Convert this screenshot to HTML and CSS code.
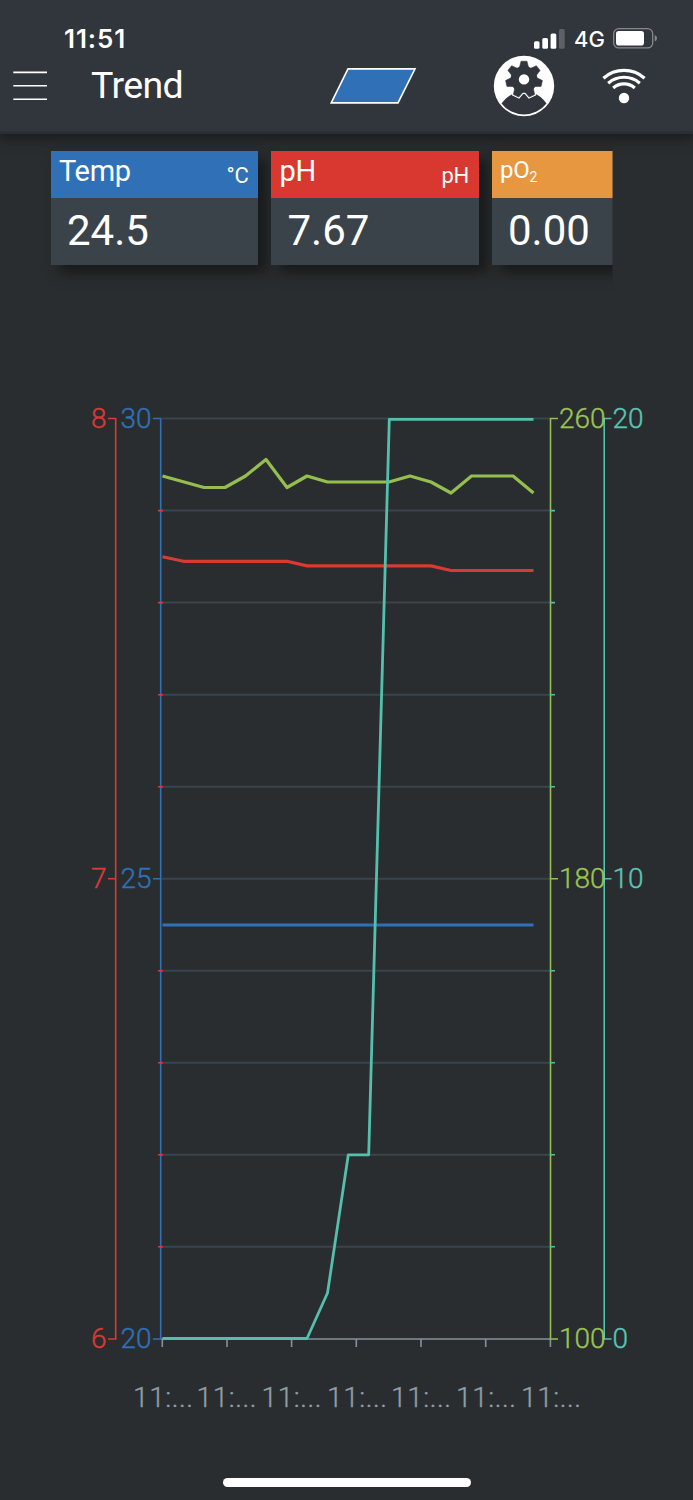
FILE: index.html
```html
<!DOCTYPE html>
<html lang="en">
<head>
  <meta charset="UTF-8" />
  <meta name="viewport" content="width=device-width, initial-scale=1.0"/>
  <title>Trend</title>
  <link rel="stylesheet" href="styles.css">
</head>
<body>
  <header>
    <div class="status-bar">
      <span class="time">11:51</span>
      <svg class="signal" width="31" height="20" viewBox="0 0 31 20">
        <rect x="0" y="12.3" width="5.5" height="7.5" rx="1.5" fill="#fff"/>
        <rect x="8.3" y="9" width="5.7" height="10.8" rx="1.5" fill="#fff"/>
        <rect x="16.6" y="4.5" width="5.7" height="15.3" rx="1.5" fill="#fff"/>
        <rect x="25" y="0" width="5.7" height="19.8" rx="1.5" fill="#5d6065"/>
      </svg>
      <span class="network">4G</span>
      <svg class="battery" width="44" height="21" viewBox="0 0 44 21">
        <rect x="0.7" y="0.7" width="39" height="19.2" rx="5" fill="none" stroke="#85888c" stroke-width="1.3"/>
        <rect x="3" y="3" width="28" height="14.6" rx="2.8" fill="#fff"/>
        <path d="M41.7 7 Q44 8 44 10.3 Q44 12.6 41.7 13.6 Z" fill="#85888c"/>
      </svg>
    </div>
    <nav>
      <svg class="menu" width="34" height="30" viewBox="0 0 34 30" stroke="#fff" stroke-width="1.6">
        <path d="M0.3 1.4H34 M0.3 14.8H34 M0.3 28.2H34"/>
      </svg>
      <h1>Trend</h1>
      <svg class="shape" width="87" height="36" viewBox="0 0 87 36">
        <path d="M18 0.9 H85 L68 34.9 H1.2 Z" fill="#2f70b7" stroke="#fff" stroke-width="1.6"/>
      </svg>
      <svg class="settings" width="62" height="62" viewBox="-31 -31 62 62">
        <defs>
          <path id="tooth" d="M-4.8 -11 L-3 -18.2 H3 L4.8 -11 Z"/>
          <g id="gear">
            <circle r="13.2"/>
            <use href="#tooth"/>
            <use href="#tooth" transform="rotate(51.43)"/>
            <use href="#tooth" transform="rotate(102.86)"/>
            <use href="#tooth" transform="rotate(154.29)"/>
            <use href="#tooth" transform="rotate(205.71)"/>
            <use href="#tooth" transform="rotate(257.14)"/>
            <use href="#tooth" transform="rotate(308.57)"/>
          </g>
        </defs>
        <circle r="30.2" fill="#fff"/>
        <path d="M-22.5 17.5 C-19 12.5 -14.5 9 -9.5 7.3 H9.5 C14.5 9 19 12.5 22.5 17.5 A28.5 28.5 0 0 1 -22.5 17.5 Z" fill="#31353c"/>
        <g transform="translate(0 -6.6)">
          <use href="#gear" fill="#fff" stroke="#fff" stroke-width="2.8"/>
          <use href="#gear" fill="#31353c" stroke="#31353c" stroke-width="0.5"/>
          <circle r="5.2" fill="#fff"/>
        </g>
      </svg>
      <svg class="wifi" width="44" height="36" viewBox="0 0 44 36" fill="none" stroke="#fff" stroke-width="3.2">
        <path d="M1.4 10.2 A31 31 0 0 1 42.6 10.2"/>
        <path d="M6.2 15.2 A24 24 0 0 1 37.8 15.2"/>
        <path d="M11.2 20 A16.5 16.5 0 0 1 32.8 20"/>
        <circle cx="22" cy="30" r="5.2" fill="#fff" stroke="none"/>
      </svg>
    </nav>
  </header>

  <!-- Sensor values -->
  <section class="cards">
    <div class="card">
      <div class="card-head temp"><span class="name">Temp</span><span class="unit">°C</span></div>
      <div class="value">24.5</div>
    </div>
    <div class="card">
      <div class="card-head ph"><span class="name">pH</span><span class="unit">pH</span></div>
      <div class="value">7.67</div>
    </div>
    <div class="card">
      <div class="card-head po2"><span class="name small">pO<sub>2</sub></span></div>
      <div class="value">0.00</div>
    </div>
  </section>

  <!-- Trend chart -->
  <svg class="chart" width="693" height="1060" viewBox="0 380 693 1060">
    <path class="grid" d="M162 418.5H550 M162 510.6H550 M162 602.6H550 M162 694.7H550 M162 786.7H550 M162 878.7H550 M162 970.7H550 M162 1062.7H550 M162 1154.8H550 M162 1246.8H550"/>

    <path class="axis gray" d="M161 1339H551 M162.3 1339V1347 M227 1339V1347 M291.6 1339V1347 M356.3 1339V1347 M421 1339V1347 M485.7 1339V1347 M550.4 1339V1347"/>
    <path class="axis red" d="M108 418.5H115.7V1339H108"/>
    <path class="axis blue" d="M153 418.5H160.7V1339H153 M153 878.7H161"/>
    <path class="axis red" d="M108 878.7H116"/>
    <path class="axis green" d="M558 418.5H550.5V1339H558 M550 878.7H558"/>
    <path class="axis teal" d="M611.5 418.5H604.2V1339H611.5 M604 878.7H611.5"/>
    <path class="axis red" d="M158 510.6H163 M158 602.6H163 M158 694.7H163 M158 786.7H163 M158 970.7H163 M158 1062.7H163 M158 1154.8H163 M158 1246.8H163"/>
    <path class="axis teal" d="M550 510.6H555 M550 602.6H555 M550 694.7H555 M550 786.7H555 M550 970.7H555 M550 1062.7H555 M550 1154.8H555 M550 1246.8H555"/>

    <polyline class="line blue" points="162.5,925 533.5,925"/>
    <polyline class="line red" points="162.5,556.7 183.5,561.3 287,561.3 307,565.9 431,565.9 451,570.5 533.5,570.5"/>
    <polyline class="line green" points="162.5,476 204,487.5 225,487.5 245.5,476 266,459.5 287,487.5 307,476 327.5,482 389,482 410,476 431,482 451,493 471.5,476 513,476 533.5,493"/>
    <polyline class="line teal" points="162.5,1338.5 307,1338.5 327.5,1293 348.3,1154.8 368.7,1154.8 389.3,419.3 533.5,419.3"/>

    <g class="label red">
      <text x="91" y="428">8</text><text x="91" y="888.3">7</text><text x="91" y="1348.3">6</text>
    </g>
    <g class="label blue">
      <text x="120.5" y="428">30</text><text x="120.5" y="888.3">25</text><text x="120.5" y="1348.3">20</text>
    </g>
    <g class="label green">
      <text x="559" y="428">260</text><text x="559" y="888.3">180</text><text x="559" y="1348.3">100</text>
    </g>
    <g class="label teal">
      <text x="612.5" y="428">20</text><text x="612.5" y="888.3">10</text><text x="612.5" y="1348.3">0</text>
    </g>
    <g class="label gray">
      <text x="133" y="1407">11:...</text><text x="196.5" y="1407">11:...</text><text x="261.5" y="1407">11:...</text><text x="327" y="1407">11:...</text><text x="391" y="1407">11:...</text><text x="456" y="1407">11:...</text><text x="521" y="1407">11:...</text>
    </g>
  </svg>

  <div class="home-bar"></div>
</body>
</html>
```
FILE: styles.css
```css
body {
  font-family: Roboto, sans-serif;
  margin: 0;
  height: 1500px;
  background: #2a2d2f;
  color: #fff;
  overflow: hidden;
}
header {
  height: 131px;
  background: #31353c;
  border-bottom: 3px solid #2b2f33;
  box-shadow: 0 2px 12px 2px #181a1b;
}

/* Status bar */
.status-bar {
  display: flex;
  align-items: center;
  height: 35px;
  padding: 21px 0 0 64px;
  font-family: Inter, sans-serif;
}
.time {
  width: 470px;
  font-size: 26px;
  font-weight: 600;
  letter-spacing: 0.9px;
}
.network {
  width: 39px;
  margin-left: 9px;
  font-size: 22px;
  font-weight: 500;
}

/* Toolbar */
nav {
  display: flex;
  align-items: center;
  height: 59px;
}
.menu {
  margin-left: 13px;
}
h1 {
  width: 238px;
  margin: -1px 0 0 44px;
  font-size: 37.5px;
  font-weight: 400;
  letter-spacing: -0.6px;
}
.shape {
  margin-left: 1px;
}
.settings {
  margin-left: 76px;
}
.wifi {
  margin-left: 47px;
}

/* Cards */
.cards {
  display: flex;
  gap: 13px;
  width: 562px;
  height: 150px;
  margin-top: 1px;
  padding: 16px 0 0 50.5px;
  overflow: hidden;
  clip-path: inset(0);
}
.card {
  flex: 0 0 207.5px;
  height: 114px;
  background: #3a434a;
  box-shadow: 8px 8px 12px #18191a;
}
.card-head {
  display: flex;
  justify-content: space-between;
  box-sizing: border-box;
  height: 46.5px;
  padding: 0 9.5px 0 8.5px;
}
.temp { background: #2f70b7; }
.ph { background: #d93830; }
.po2 { background: #e7973f; }
.name {
  font-size: 29px;
  line-height: 41px;
  letter-spacing: -0.3px;
}
.name.small {
  font-size: 24px;
  line-height: 38px;
}
.name sub {
  font-size: 14px;
  line-height: 0;
  vertical-align: -4px;
}
.unit {
  font-size: 22px;
  line-height: 49px;
  letter-spacing: -0.3px;
}
.value {
  padding-left: 16.5px;
  font-size: 42px;
  line-height: 66px;
}

/* Chart */
.chart {
  display: block;
  margin-top: 79px;
}
.grid {
  fill: none;
  stroke: #3a444c;
  stroke-width: 2;
}
.axis {
  fill: none;
  stroke-width: 1.6;
}
.line {
  fill: none;
  stroke-width: 3.2;
  stroke-linejoin: round;
}
.line.teal { stroke-width: 2.8; }
.red { stroke: #d93a34; }
.blue { stroke: #2f70b7; }
.green { stroke: #94bf50; }
.teal { stroke: #55bfae; }
.gray { stroke: #84929a; }
.label {
  font-size: 28px;
  font-weight: 300;
  stroke-width: 0.4;
}
.label.red { fill: #d93a34; }
.label.blue { fill: #2f70b7; }
.label.green { fill: #9cc653; }
.label.teal { fill: #5bc8b7; }
.label.gray {
  fill: #94a2aa;
  letter-spacing: 0.6px;
}

.home-bar {
  width: 248px;
  height: 9px;
  margin: 38px auto 0;
  border-radius: 5px;
  background: #fff;
}
```
